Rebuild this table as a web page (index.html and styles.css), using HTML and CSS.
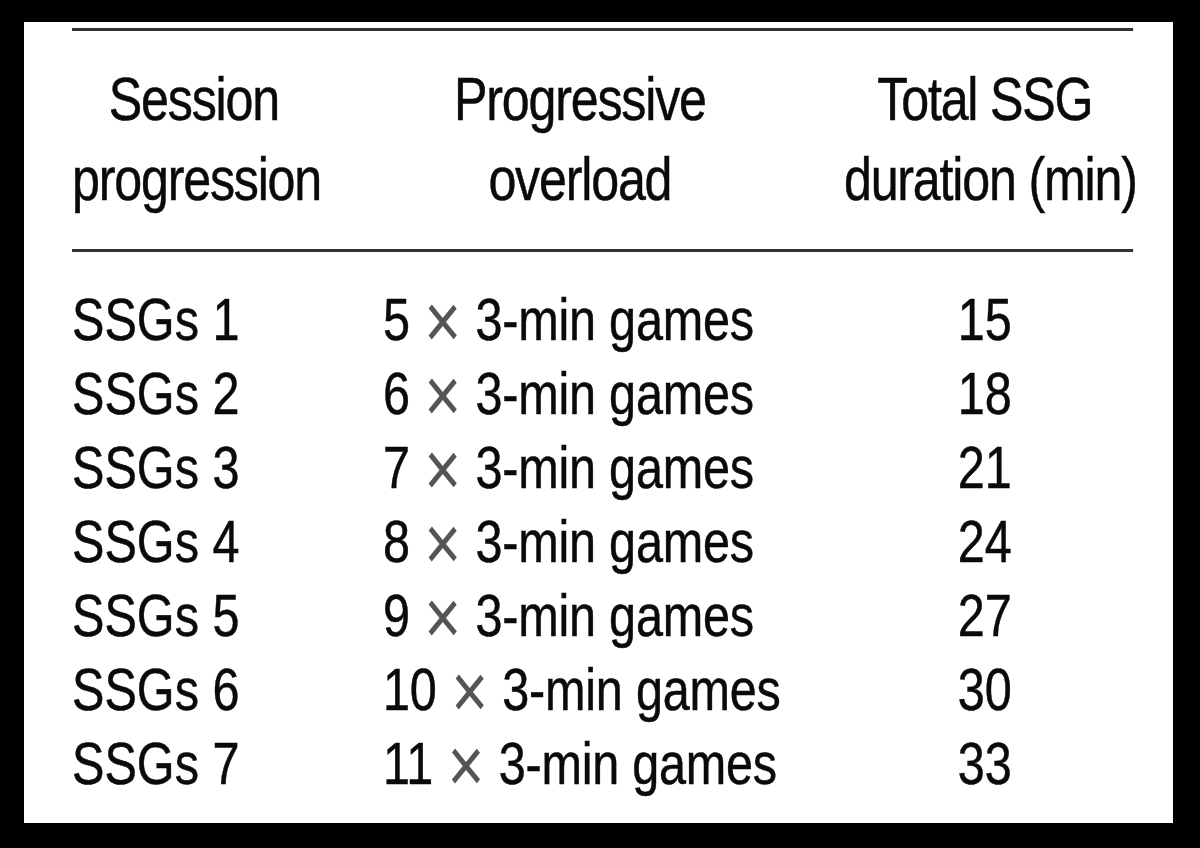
FILE: index.html
```html
<!DOCTYPE html>
<html lang="en">
<head>
<meta charset="utf-8">
<title>SSG session progression</title>
<link rel="stylesheet" href="styles.css">
</head>
<body>
<div class="sheet">
  <div class="table">
    <div class="head">
      <div class="c1">Session<br>progression</div>
      <div class="c2">Progressive<br>overload</div>
      <div class="c3">Total SSG<br>duration (min)</div>
    </div>
    <div class="body">
      <div class="row"><span class="c1">SSGs 1</span><span class="c2">5 <span class="x">×</span> 3-min games</span><span class="c3">15</span></div>
      <div class="row"><span class="c1">SSGs 2</span><span class="c2">6 <span class="x">×</span> 3-min games</span><span class="c3">18</span></div>
      <div class="row"><span class="c1">SSGs 3</span><span class="c2">7 <span class="x">×</span> 3-min games</span><span class="c3">21</span></div>
      <div class="row"><span class="c1">SSGs 4</span><span class="c2">8 <span class="x">×</span> 3-min games</span><span class="c3">24</span></div>
      <div class="row"><span class="c1">SSGs 5</span><span class="c2">9 <span class="x">×</span> 3-min games</span><span class="c3">27</span></div>
      <div class="row"><span class="c1">SSGs 6</span><span class="c2">10 <span class="x">×</span> 3-min games</span><span class="c3">30</span></div>
      <div class="row"><span class="c1">SSGs 7</span><span class="c2">11 <span class="x">×</span> 3-min games</span><span class="c3">33</span></div>
    </div>
  </div>
</div>
</body>
</html>
```

FILE: styles.css
```css
html, body {
  margin: 0;
  padding: 0;
  background: #000;
  width: 1200px;
  height: 848px;
  overflow: hidden;
}

.sheet {
  position: relative;
  margin: 22px 0 0 24px;
  width: 1149px;
  height: 801px;
  background: #fff;
  box-sizing: border-box;
  padding: 6px 0 0 48px;
  overflow: hidden;
  font-family: "Liberation Sans", Arial, sans-serif;
  color: #0a0a0a;
  -webkit-text-stroke: 0.5px #0a0a0a;
}

.table {
  width: 1310px;
  transform: scaleX(0.81);
  transform-origin: 0 0;
}

.head {
  display: grid;
  grid-template-columns: 301px 652px 348px;
  border-top: 3px solid #333;
  border-bottom: 3px solid #333;
  padding: 27.5px 0 30.5px;
  font-size: 62px;
  line-height: 80px;
  letter-spacing: -1.5px;
  text-align: center;
  white-space: nowrap;
}

.body {
  padding-top: 31px;
}

.row {
  display: grid;
  grid-template-columns: 301px 652px 348px;
  font-size: 60px;
  line-height: 74px;
  height: 74px;
  white-space: nowrap;
}

.row .c1 {
  text-align: left;
}

.row .c2 {
  text-align: left;
  padding-left: 83px;
  letter-spacing: -0.3px;
}

.row .c3 {
  text-align: center;
}

.x {
  display: inline-block;
  color: #555;
  -webkit-text-stroke: 0;
  font-size: 1.3em;
  line-height: 0;
  margin: 0 0.02em;
  vertical-align: -0.1em;
}
```
